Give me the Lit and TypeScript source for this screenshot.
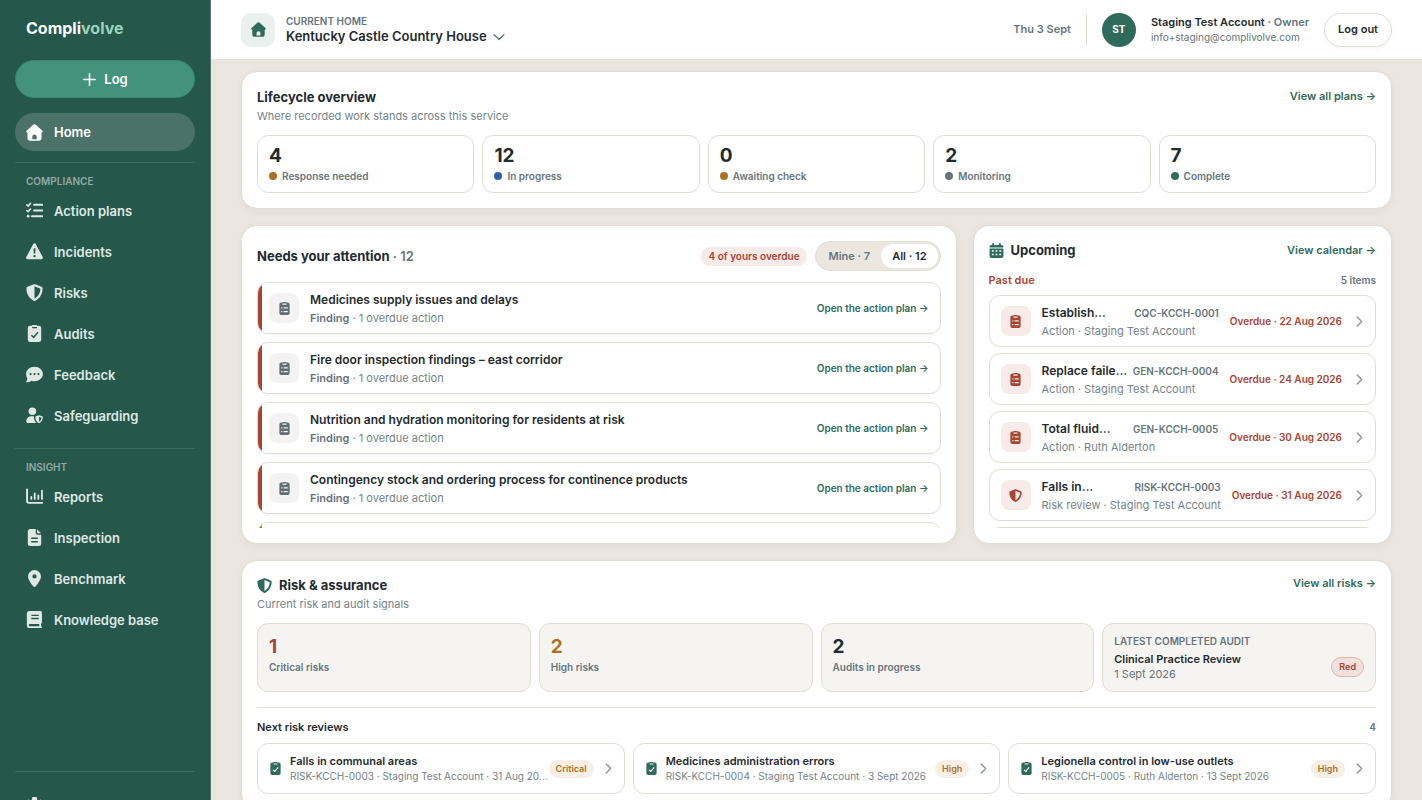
import { LitElement, html, css, svg, nothing } from "lit";
import { customElement, state } from "lit/decorators.js";
import { classMap } from "lit/directives/class-map.js";

const glyphs: Record<string, unknown> = {
  house: svg`<path fill-rule="evenodd" d="M9.2.7a1.8 1.8 0 0 0-2.4 0L.8 6.1C-.1 6.9.3 8.2 1.4 8.3v5.2c0 1.3 1 2.3 2.3 2.3h8.6c1.3 0 2.3-1 2.3-2.3V8.3c1.1-.1 1.5-1.4.6-2.2zM5.9 14.3v-2.4a2.1 2.1 0 0 1 4.2 0v2.4z"/>`,
  plus: svg`<path d="M8 2v12M2 8h12" fill="none" stroke="currentColor" stroke-width="1.7" stroke-linecap="round"/>`,
  tasks: svg`<path d="M7.6 2.6h7.6M7.6 8h7.6M5.6 13.4h9.6" fill="none" stroke="currentColor" stroke-width="1.9" stroke-linecap="round"/><path d="M.8 2.7l1.2 1.2L4.2 1.3M.8 8l1.2 1.2 2.2-2.6" fill="none" stroke="currentColor" stroke-width="1.5" stroke-linecap="round" stroke-linejoin="round"/><circle cx="2" cy="13.4" r="1.3"/>`,
  warning: svg`<path fill-rule="evenodd" d="M9.3 1.1a1.5 1.5 0 0 0-2.6 0L.3 13.2c-.6 1 .1 2.2 1.3 2.2h12.8c1.2 0 1.9-1.2 1.3-2.2zM8 5c.6 0 1 .5.9 1l-.2 3.5a.7.7 0 0 1-1.4 0L7.1 6c0-.5.3-1 .9-1zm0 6.2a1.1 1.1 0 1 1 0 2.2 1.1 1.1 0 0 1 0-2.2z"/>`,
  shield: svg`<path fill-rule="evenodd" d="M7.4.3a1.5 1.5 0 0 1 1.2 0l6 2.4c.6.2 1 .8 1 1.4 0 4.7-2 9.3-6.8 11.6a1.6 1.6 0 0 1-1.5 0C2.4 13.4.4 8.8.4 4.1c0-.6.4-1.2 1-1.4zM8 2.2v11.6c3.6-1.9 5.5-5.5 5.6-9.3z"/>`,
  clipCheck: svg`<path fill-rule="evenodd" d="M5.4.6A1.5 1.5 0 0 1 6.5 0h3a1.5 1.5 0 0 1 1.1.6h1.5a2.2 2.2 0 0 1 2.2 2.2v11a2.2 2.2 0 0 1-2.2 2.2H3.9a2.2 2.2 0 0 1-2.2-2.2v-11A2.2 2.2 0 0 1 3.9.6zM5.7 1.9v1.2h4.6V1.9zM11.7 7.2l-1-.9-3.5 4.3-1.7-1.5-.9 1 2.7 2.5z"/>`,
  clipList: svg`<path fill-rule="evenodd" d="M5.4.6A1.5 1.5 0 0 1 6.5 0h3a1.5 1.5 0 0 1 1.1.6h1.5a2.2 2.2 0 0 1 2.2 2.2v11a2.2 2.2 0 0 1-2.2 2.2H3.9a2.2 2.2 0 0 1-2.2-2.2v-11A2.2 2.2 0 0 1 3.9.6zM5.5 1.9v1.4h5V1.9zM4 6.5v1.4h1.5V6.5zm3 0v1.4h5V6.5zm-3 4.6v1.4h1.5v-1.4zm3 0v1.4h5v-1.4z"/>`,
  comment: svg`<path fill-rule="evenodd" d="M8 .7c4.4 0 7.9 3 7.9 6.8s-3.5 6.8-7.9 6.8c-1 0-2-.2-2.9-.5-1.2.9-2.9 1.6-4.5 1.6-.5 0-.7-.6-.4-.9.7-.8 1.1-1.7 1.2-2.7A6.3 6.3 0 0 1 .1 7.5C.1 3.7 3.6.7 8 .7zM4.3 6.6a1 1 0 1 0 0 2 1 1 0 0 0 0-2zm3.7 0a1 1 0 1 0 0 2 1 1 0 0 0 0-2zm3.7 0a1 1 0 1 0 0 2 1 1 0 0 0 0-2z"/>`,
  userShield: svg`<circle cx="6" cy="4" r="3.6"/><path d="M.3 13.6c0-2.8 2-4.8 4.6-4.8h2.6c-.2 2.6.6 4.6 2.2 6.2H1.5c-.7 0-1.2-.6-1.2-1.4z"/><path fill-rule="evenodd" d="M12.3 7.7l3 1.1c.3.1.5.4.5.7 0 2.6-1.1 4.7-3.5 5.9-2.4-1.2-3.5-3.3-3.5-5.9 0-.3.2-.6.5-.7zm0 1.5v4.6c1.5-.9 2.2-2.2 2.2-3.8z"/>`,
  chart: svg`<path d="M1 1.3v11a1.7 1.7 0 0 0 1.7 1.7H15.3" fill="none" stroke="currentColor" stroke-width="1.8" stroke-linecap="round"/><path d="M5 8.3v2M8.2 5v5.3M11.6 7v3.3M15 2.5v7.8" fill="none" stroke="currentColor" stroke-width="1.7" stroke-linecap="round"/>`,
  file: svg`<path fill-rule="evenodd" d="M4 .1h5.2v3.6c0 .9.7 1.6 1.6 1.6h3.5v8.5a2.2 2.2 0 0 1-2.2 2.2H3.9a2.2 2.2 0 0 1-2.2-2.2V2.3C1.7 1.1 2.7.1 4 .1zM4.9 8v1.3h6.2V8zm0 3.3v1.3h6.2v-1.3z"/><path d="M10.4.3l3.7 3.8h-3.3a.4.4 0 0 1-.4-.4z"/>`,
  pin: svg`<path fill-rule="evenodd" d="M8 0a6.1 6.1 0 0 1 6.1 6.1c0 3-3.3 7.2-5.1 9.4a1.3 1.3 0 0 1-2 0C5.2 13.3 1.9 9.1 1.9 6.1A6.1 6.1 0 0 1 8 0zm0 4.1a2 2 0 1 0 0 4 2 2 0 0 0 0-4z"/>`,
  book: svg`<path fill-rule="evenodd" d="M3.5 0h10.1c.8 0 1.4.6 1.4 1.4v9.4c0 .6-.3 1-.8 1.2v2.3a.8.8 0 0 1 0 1.7H3.5A2.7 2.7 0 0 1 .8 13.3V2.7A2.7 2.7 0 0 1 3.5 0zM3.6 12.3a1 1 0 0 0 0 2h8.9v-2zM5 3.5v1.3h7V3.5zm0 2.9v1.3h7V6.4z"/>`,
  calendar: svg`<path fill-rule="evenodd" d="M4.4 0c.6 0 1 .4 1 1v1h5.2V1a1 1 0 0 1 2 0v1h1c1 0 1.8.8 1.8 1.8v1H.6v-1C.6 2.8 1.4 2 2.4 2h1V1c0-.6.4-1 1-1zM.6 5.8h14.8v8a2.2 2.2 0 0 1-2.2 2.2H2.8a2.2 2.2 0 0 1-2.2-2.2zM3 7.7v1.6h2V7.700zm4 0v1.600h2V7.700zm4 0v1.600h2V7.700zm-8 3.800v1.600h2v-1.600zm4 0v1.600h2v-1.600zm4 0v1.600h2v-1.600z"/>`,
  gear: svg`<path fill-rule="evenodd" d="M6 0h4l.5 2.6 1 .6 2.5-.8 1.8 3.2-1.9 1.7v1.4l1.900 1.700-1.800 3.200-2.500-.8-1 .6L10 16H6l-.5-2.600-1-.6-2.500.8L.2 10.400l1.900-1.700V7.300L.2 5.600 2 2.400l2.500.8 1-.6zM8 5.400a2.600 2.600 0 1 0 0 5.200 2.600 2.600 0 0 0 0-5.200z"/>`,
  down: svg`<path d="M1.5 5L8 11.3 14.5 5" fill="none" stroke="currentColor" stroke-width="1.8" stroke-linecap="round" stroke-linejoin="round"/>`,
  right: svg`<path d="M5.2 2.5L10.7 8l-5.5 5.5" fill="none" stroke="currentColor" stroke-width="1.7" stroke-linecap="round" stroke-linejoin="round"/>`,
};

const icon = (name: string, size: string) =>
  html`<svg class="icon ${size}" viewBox="0 0 16 16" aria-hidden="true">${glyphs[name]}</svg>`;

const shared = css`
  * { box-sizing: border-box; }
  :host {
    --ink: #1f2b30;
    --muted: #66757b;
    --soft: #75838a;
    --green: #2f6b5a;
    --red: #a84432;
    --amber: #ae6f21;
    --line: #e1ddd4;
    --canvas: #ebe7e0;
  }
  a { color: inherit; text-decoration: none; }
  button { font: inherit; color: inherit; cursor: pointer; border: 0; background: none; padding: 0; }
  h2, h3, p, ul { margin: 0; padding: 0; }
  ul { list-style: none; }
  .icon { display: block; flex: none; fill: currentColor; }
  .s12 { width: 12px; height: 12px; }
  .s13 { width: 13px; height: 13px; }
  .s15 { width: 15px; height: 15px; }
  .s17 { width: 17px; height: 17px; }
`;

@customElement("side-nav")
class SideNav extends LitElement {
  static styles = [shared, css`
    :host {
      display: flex; flex-direction: column; height: 100%; overflow: hidden; box-sizing: border-box;
      padding: 0 15px; background: #25574b; border-right: 1px solid #507a70;
      color: #dfe8e4; font-size: 13px; font-weight: 600; line-height: 18px;
    }
    .brand { padding: 18px 11px 0; font-size: 16px; line-height: 20px; font-weight: 700; color: #fff; }
    .brand span { color: #9bd5bd; }
    .log {
      display: flex; align-items: center; justify-content: center; gap: 7px; flex: none;
      height: 38px; margin-top: 22px; border-radius: 19px; background: #43937c;
      border: 1px solid #3a8670; color: #fff;
    }
    .item { display: flex; align-items: center; gap: 11px; height: 37px; padding: 0 11px; border-radius: 19px; }
    .home { height: 38px; margin: 15px 0 11px; background: #4a7268; padding: 0 11px; color: #fff; }
    .group { border-top: 1px solid #3a6c60; padding-top: 11px; }
    .group h3 { padding: 0 11px; font-size: 10px; line-height: 14px; font-weight: 600; color: #92aba4; }
    ul { display: grid; gap: 4px; padding: 4px 0 14px; }
    .foot { margin-top: auto; flex: 0 0 29px; min-height: 0; border-top: 1px solid #3a6c60; padding-top: 15px; overflow: hidden; }
  `];

  private groups: [string, [string, string][]][] = [
    ["COMPLIANCE", [["tasks", "Action plans"], ["warning", "Incidents"], ["shield", "Risks"], ["clipCheck", "Audits"], ["comment", "Feedback"], ["userShield", "Safeguarding"]]],
    ["INSIGHT", [["chart", "Reports"], ["file", "Inspection"], ["pin", "Benchmark"], ["book", "Knowledge base"]]],
  ];

  render() {
    return html`
      <div class="brand">Compli<span>volve</span></div>
      <button class="log">${icon("plus", "s15")}Log</button>
      <a class="item home" href="#home" aria-current="page">${icon("house", "s17")}Home</a>
      ${this.groups.map(([name, items]) => html`
        <nav class="group" aria-label=${name}>
          <h3>${name}</h3>
          <ul>${items.map(([i, label]) => html`<li><a class="item" href="#">${icon(i, "s17")}${label}</a></li>`)}</ul>
        </nav>`)}
      <div class="foot"><a class="item" href="#settings" aria-label="Settings">${icon("gear", "s17")}</a></div>
    `;
  }
}

@customElement("top-bar")
class TopBar extends LitElement {
  static styles = [shared, css`
    :host {
      display: flex; align-items: center; height: 60px; flex: none; padding: 0 30px; box-sizing: border-box;
      background: #fff; border-bottom: 1px solid #e6e2db; color: var(--ink);
      font-size: 11px; line-height: 15px;
    }
    .tile { display: grid; place-items: center; width: 34px; height: 34px; border-radius: 10px; background: #e9f0ee; color: var(--green); }
    .site { margin-left: 11px; text-align: left; }
    .over { display: block; font-size: 10px; line-height: 14px; font-weight: 600; color: var(--muted); }
    .name { display: flex; align-items: center; gap: 6px; font-size: 13px; line-height: 17px; font-weight: 600; }
    .name .icon { color: var(--muted); }
    .date { margin-left: auto; font-weight: 600; color: var(--muted); }
    .rule { width: 1px; height: 31px; margin: 0 15px; background: var(--line); }
    .avatar { display: grid; place-items: center; width: 34px; height: 34px; border-radius: 50%; background: var(--green); color: #fff; font-size: 10px; font-weight: 700; }
    .who { margin: 0 15px; font-weight: 600; }
    .who span { color: var(--muted); }
    .who p { color: var(--muted); font-size: 10px; font-weight: 400; line-height: 14px; }
    .out { height: 34px; padding: 0 13px; border: 1px solid var(--line); border-radius: 17px; background: #fff; font-weight: 600; box-shadow: 0 2px 4px #1f2b300a; }
  `];
  render() {
    return html`
      <div class="tile">${icon("house", "s15")}</div>
      <button class="site"><span class="over">CURRENT HOME</span><span class="name">Kentucky Castle Country House ${icon("down", "s12")}</span></button>
      <span class="date">Thu 3 Sept</span>
      <span class="rule"></span>
      <span class="avatar">ST</span>
      <div class="who">Staging Test Account <span>· Owner</span><p>info+staging@complivolve.com</p></div>
      <button class="out">Log out</button>
    `;
  }
}

@customElement("app-root")
class AppRoot extends LitElement {
  @state() private scope = "all";

  static styles = [shared, css`
    :host {
      display: grid; grid-template-columns: 211px minmax(0, 1fr); height: 100vh; overflow: hidden;
      font-family: Inter, "Liberation Sans", sans-serif; font-size: 11px; line-height: 15px;
      color: var(--ink); background: var(--canvas);
    }
    .page { display: flex; flex-direction: column; min-width: 0; min-height: 0; }
    main { display: flex; flex-direction: column; gap: 16px; padding: 11px 30px 30px; min-height: 0; overflow: hidden; }
    .card { flex: none; min-width: 0; padding: 15px; background: #fff; border: 1px solid var(--line); border-radius: 16px; box-shadow: 0 2px 8px #1f2b300d; }
    .head { display: flex; align-items: flex-start; justify-content: space-between; }
    h2 { display: flex; align-items: center; gap: 7px; font-size: 13px; line-height: 18px; font-weight: 700; }
    h2 span { color: var(--muted); font-weight: 600; }
    h2 .icon, .review > .icon { color: var(--green); }
    .sub { font-size: 11px; line-height: 20px; color: var(--soft); }
    .more { font-weight: 600; color: var(--green); }
    .lift { padding-top: 1px; }
    .more.lift { padding-top: 2px; }

    .stats, .risks, .reviews { display: grid; gap: 8px; }
    .stats { grid-template-columns: repeat(5, minmax(0, 1fr)); margin-top: 9px; }
    .stat { padding: 8px 11px; border: 1px solid var(--line); border-radius: 11px; font-size: 10px; font-weight: 600; color: var(--muted); }
    .num { font-size: 19px; line-height: 24px; font-weight: 700; color: var(--ink); }
    .key { display: flex; align-items: center; gap: 5px; line-height: 16px; }
    .dot { width: 8px; height: 8px; border-radius: 50%; background: var(--muted); }
    .dot.amber { background: var(--amber); }
    .dot.blue { background: #3560a8; }
    .dot.green { background: var(--green); }

    .columns { flex: none; display: grid; grid-template-columns: minmax(0, 29fr) minmax(0, 17fr); gap: 16px; }
    .tools { display: flex; align-items: center; gap: 8px; }
    .head.center { align-items: center; }
    .late { padding: 2px 7px; border-radius: 10px; background: #f6ebe8; color: var(--red); font-weight: 600; font-size: 10px; }
    .toggle { display: flex; padding: 2px; border: 1px solid var(--line); border-radius: 15px; background: var(--canvas); color: var(--muted); font-weight: 600; }
    .toggle button { height: 24px; padding: 0 11px; border-radius: 12px; }
    .toggle .on { background: #fff; color: var(--ink); }

    .tasks { display: grid; gap: 8px; align-content: start; margin-top: 11px; max-height: 246px; overflow: hidden; }
    .task { display: flex; align-items: center; height: 52px; padding-right: 11px; border: 1px solid var(--line); border-radius: 11px; overflow: hidden; box-shadow: 0 2px 4px #1f2b3008; }
    .edge { align-self: stretch; width: 4px; background: var(--red); }
    .edge.amber { background: var(--amber); }
    .badge { display: grid; place-items: center; flex: none; width: 30px; height: 30px; border-radius: 8px; background: #f3f3f3; color: #5f6f75; }
    .badge.hot { background: #f6ebe8; color: var(--red); }
    .task .badge { margin: 0 11px 0 7px; }
    .body { flex: 1; min-width: 0; color: var(--soft); line-height: 18px; white-space: nowrap; }
    .body b { color: var(--muted); font-weight: 600; }
    .body h3 { font-size: 12px; line-height: 18px; font-weight: 600; color: var(--ink); }
    .task .body { padding-top: 2px; }
    .open { font-size: 10px; font-weight: 600; color: var(--green); }

    .past { display: flex; justify-content: space-between; margin-top: 14px; font-weight: 600; color: var(--red); }
    .past span { font-size: 10px; color: var(--muted); }
    .dues { display: grid; grid-template-columns: minmax(0, 1fr); gap: 6px; align-content: start; margin-top: 7px; max-height: 233px; overflow: hidden; }
    .due { display: flex; align-items: center; gap: 11px; height: 52px; padding: 0 9px 0 11px; border: 1px solid var(--line); border-radius: 11px; }
    .due .body { padding-top: 1px; }
    .line { display: flex; justify-content: space-between; gap: 4px; }
    .line span { font-size: 10px; font-weight: 600; color: var(--muted); }
    .when { font-size: 10px; font-weight: 600; color: var(--red); white-space: nowrap; }
    .due > .icon, .review > .icon:last-child { color: #8a969b; }

    .risks { grid-template-columns: repeat(4, minmax(0, 1fr)); margin-top: 9px; }
    .risk { padding: 11px 11px 9px; border: 1px solid var(--line); border-radius: 11px; background: #f6f4f1; font-size: 10px; font-weight: 600; color: var(--muted); }
    .num.red { color: var(--red); }
    .num.amber { color: var(--amber); }
    .audit { display: flex; justify-content: space-between; align-items: center; padding-top: 5px; }
    .audit h3 { font-size: 11px; line-height: 15px; font-weight: 600; color: var(--ink); }
    .audit p { font-size: 11px; font-weight: 400; line-height: 15px; }
    .over { line-height: 12px; }
    .pill { padding: 1px 7px; border-radius: 10px; background: #f7efe6; color: var(--amber); font-size: 9px; line-height: 16px; font-weight: 600; }
    .pill.red { background: #f1e0dc; border: 1px solid #dfb6ad; color: var(--red); }
    .next { display: flex; justify-content: space-between; margin-top: 15px; padding-top: 12px; border-top: 1px solid var(--line); font-weight: 600; }
    .next h3 { font-size: 11px; line-height: 15px; font-weight: 600; }
    .next span { font-size: 10px; color: var(--muted); }
    .reviews { grid-template-columns: repeat(3, minmax(0, 1fr)); margin-top: 8px; }
    .review { display: flex; align-items: center; gap: 8px; height: 51px; padding: 0 9px 0 11px; border: 1px solid var(--line); border-radius: 11px; }
    .review .body { font-size: 10px; line-height: 15px; }
    .review h3 { font-size: 11px; line-height: 15px; }
  `];

  private stats = [["4", "amber", "Response needed"], ["12", "blue", "In progress"], ["0", "amber", "Awaiting check"], ["2", "", "Monitoring"], ["7", "green", "Complete"]];
  private tasks = ["Medicines supply issues and delays", "Fire door inspection findings – east corridor", "Nutrition and hydration monitoring for residents at risk", "Contingency stock and ordering process for continence products", ""];
  private dues = [
    ["clipList", "Establish…", "CQC-KCCH-0001", "Action · Staging Test Account", "22 Aug 2026"],
    ["clipList", "Replace faile…", "GEN-KCCH-0004", "Action · Staging Test Account", "24 Aug 2026"],
    ["clipList", "Total fluid…", "GEN-KCCH-0005", "Action · Ruth Alderton", "30 Aug 2026"],
    ["shield", "Falls in…", "RISK-KCCH-0003", "Risk review · Staging Test Account", "31 Aug 2026"],
  ];
  private reviews = [
    ["Falls in communal areas", "RISK-KCCH-0003 · Staging Test Account · 31 Aug 20…", "Critical"],
    ["Medicines administration errors", "RISK-KCCH-0004 · Staging Test Account · 3 Sept 2026", "High"],
    ["Legionella control in low-use outlets", "RISK-KCCH-0005 · Ruth Alderton · 13 Sept 2026", "High"],
  ];

  private toggle(id: string, label: string) {
    return html`<button class=${classMap({ on: this.scope === id })} aria-pressed=${this.scope === id} @click=${() => (this.scope = id)}>${label}</button>`;
  }

  render() {
    return html`
      <side-nav></side-nav>
      <div class="page">
        <top-bar></top-bar>
        <main>
          <section class="card">
            <div class="head">
              <div class="lift"><h2>Lifecycle overview</h2><p class="sub">Where recorded work stands across this service</p></div>
              <a class="more lift" href="#plans">View all plans →</a>
            </div>
            <div class="stats">
              ${this.stats.map(([n, tone, label]) => html`<div class="stat"><div class="num">${n}</div><div class="key"><i class="dot ${tone}"></i>${label}</div></div>`)}
            </div>
          </section>

          <div class="columns">
            <section class="card">
              <div class="head center">
                <h2><div>Needs your attention <span>· 12</span></div></h2>
                <div class="tools">
                  <span class="late">4 of yours overdue</span>
                  <div class="toggle">${this.toggle("mine", "Mine · 7")}${this.toggle("all", "All · 12")}</div>
                </div>
              </div>
              <div class="tasks">
                ${this.tasks.map((t) => html`
                  <article class="task">
                    <i class="edge ${t ? "" : "amber"}"></i>
                    ${t ? html`
                      <span class="badge">${icon("clipList", "s13")}</span>
                      <div class="body"><h3>${t}</h3><p><b>Finding</b> · 1 overdue action</p></div>
                      <a class="open" href="#plan">Open the action plan →</a>` : nothing}
                  </article>`)}
              </div>
            </section>

            <section class="card">
              <div class="head">
                <h2>${icon("calendar", "s15")}Upcoming</h2>
                <a class="more lift" href="#calendar">View calendar →</a>
              </div>
              <div class="past">Past due<span>5 items</span></div>
              <div class="dues">
                ${this.dues.map(([i, title, code, meta, date]) => html`
                  <article class="due">
                    <span class="badge hot">${icon(i, "s13")}</span>
                    <div class="body"><div class="line"><h3>${title}</h3><span>${code}</span></div><p>${meta}</p></div>
                    <span class="when">Overdue · ${date}</span>
                    ${icon("right", "s13")}
                  </article>`)}
                <article class="due"></article>
              </div>
            </section>
          </div>

          <section class="card">
            <div class="head">
              <div><h2>${icon("shield", "s15")}Risk &amp; assurance</h2><p class="sub">Current risk and audit signals</p></div>
              <a class="more" href="#risks">View all risks →</a>
            </div>
            <div class="risks">
              <div class="risk"><div class="num red">1</div><div class="key">Critical risks</div></div>
              <div class="risk"><div class="num amber">2</div><div class="key">High risks</div></div>
              <div class="risk"><div class="num">2</div><div class="key">Audits in progress</div></div>
              <div class="risk">
                <div class="over">LATEST COMPLETED AUDIT</div>
                <div class="audit"><div><h3>Clinical Practice Review</h3><p>1 Sept 2026</p></div><span class="pill red">Red</span></div>
              </div>
            </div>
            <div class="next"><h3>Next risk reviews</h3><span>4</span></div>
            <div class="reviews">
              ${this.reviews.map(([title, meta, level]) => html`
                <article class="review">
                  ${icon("clipCheck", "s13")}
                  <div class="body"><h3>${title}</h3><p>${meta}</p></div>
                  <span class="pill">${level}</span>
                  ${icon("right", "s13")}
                </article>`)}
            </div>
          </section>
        </main>
      </div>
    `;
  }
}
